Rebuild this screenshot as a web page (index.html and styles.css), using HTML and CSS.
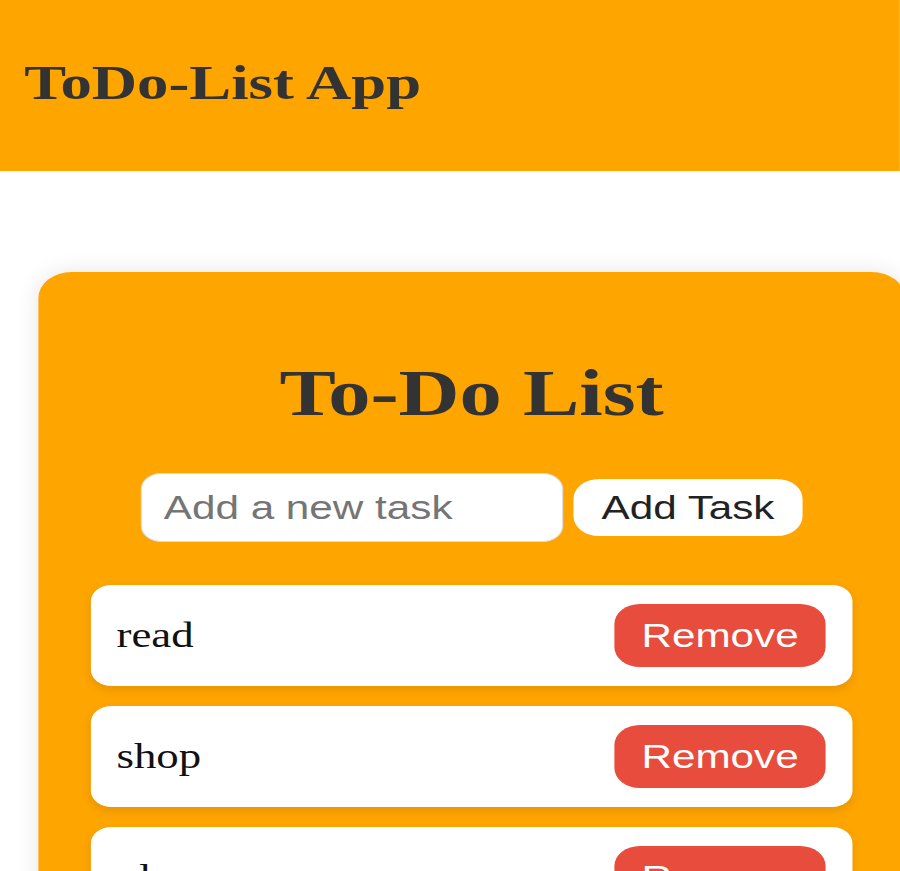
FILE: index.html
```html
<!DOCTYPE html>
<html lang="en">
<head>
<meta charset="utf-8">
<title>ToDo-List App</title>
<link rel="stylesheet" href="styles.css">
</head>
<body>
<div class="page">
  <header class="app-header">
    <h1 class="app-title">ToDo-List App</h1>
  </header>
  <main class="todo-card">
    <h2 class="todo-title">To-Do List</h2>
    <form class="todo-form">
      <input class="todo-input" type="text" placeholder="Add a new task">
      <button class="add-btn" type="button">Add Task</button>
    </form>
    <ul class="todo-list">
      <li class="todo-item"><span class="todo-text">read</span><button class="remove-btn" type="button">Remove</button></li>
      <li class="todo-item"><span class="todo-text">shop</span><button class="remove-btn" type="button">Remove</button></li>
      <li class="todo-item"><span class="todo-text">play</span><button class="remove-btn" type="button">Remove</button></li>
    </ul>
  </main>
</div>
</body>
</html>
```

FILE: styles.css
```css
html, body {
  margin: 0;
  padding: 0;
  overflow: hidden;
  background: #ffffff;
}

body {
  font-family: "Liberation Serif", "Times New Roman", serif;
}

.page {
  width: 703px;
  transform: scaleX(1.28);
  transform-origin: 0 0;
}

.app-header {
  height: 171px;
  background: #ffa500;
  display: flex;
  align-items: center;
  padding: 0 0 4px 19px;
  box-sizing: border-box;
}

.app-title {
  margin: 0;
  font-size: 49px;
  line-height: 1.15;
  font-weight: bold;
  color: #333333;
}

.todo-card {
  display: block;
  width: 677px;
  box-sizing: border-box;
  margin: 101px 0 0 30px;
  padding: 83px 41px 40px;
  background: #ffa500;
  border-radius: 26px;
  box-shadow: 0 0 20px rgba(0, 0, 0, 0.1);
}

.todo-title {
  margin: 0;
  font-size: 66px;
  line-height: 76px;
  font-weight: bold;
  color: #333333;
  text-align: center;
}

.todo-form {
  margin: 42px 0 0;
  display: flex;
  justify-content: center;
  align-items: center;
  gap: 8px;
}

.todo-input {
  width: 330px;
  height: 69px;
  box-sizing: border-box;
  padding: 0 17px;
  border: 1px solid #dddddd;
  border-radius: 16px;
  background: #ffffff;
  font-family: "Liberation Sans", Arial, sans-serif;
  font-size: 33px;
  color: #333333;
  outline: none;
}

.todo-input::placeholder {
  color: #757575;
}

.add-btn {
  height: 57px;
  padding: 0 22px;
  border: none;
  border-radius: 20px;
  background: #ffffff;
  color: #222222;
  font-family: "Liberation Sans", Arial, sans-serif;
  font-size: 33px;
}

.todo-list {
  list-style: none;
  margin: 43px 0 0;
  padding: 0;
  display: flex;
  flex-direction: column;
  gap: 20px;
}

.todo-item {
  height: 101px;
  box-sizing: border-box;
  padding: 0 21px 0 20px;
  display: flex;
  align-items: center;
  justify-content: space-between;
  background: #ffffff;
  border-radius: 16px;
  box-shadow: 0 4px 8px rgba(0, 0, 0, 0.1);
}

.todo-text {
  font-size: 35px;
  color: #111111;
}

.remove-btn {
  height: 63px;
  padding: 0 21px;
  border: none;
  border-radius: 20px;
  background: #e74c3c;
  color: #ffffff;
  font-family: "Liberation Sans", Arial, sans-serif;
  font-size: 33px;
}
```
